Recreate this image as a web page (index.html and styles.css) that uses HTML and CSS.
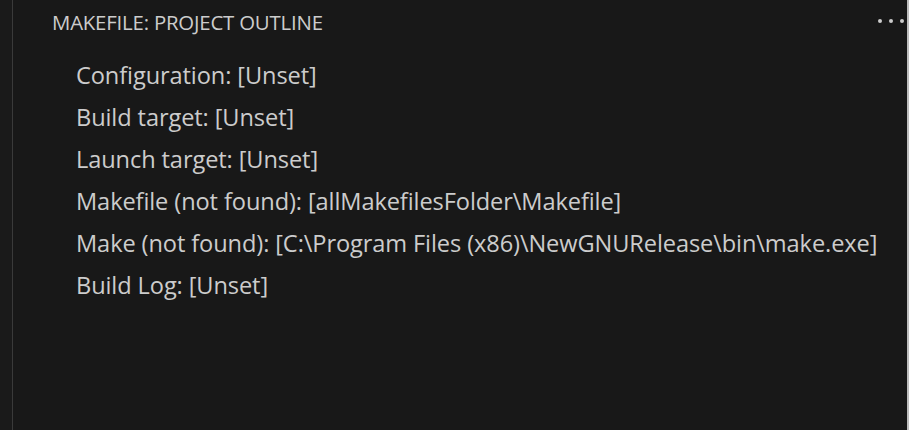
FILE: index.html
```html
<!DOCTYPE html>
<html>
<head>
<meta charset="utf-8">
<link rel="stylesheet" href="styles.css">
</head>
<body>
<div class="frame">
  <div class="gutter"></div>
  <div class="panel">
    <div class="header">
      <span class="title">MAKEFILE: PROJECT OUTLINE</span>
      <span class="more"><i></i><i></i><i></i></span>
    </div>
    <ul class="tree">
      <li class="row">Configuration: [Unset]</li>
      <li class="row">Build target: [Unset]</li>
      <li class="row">Launch target: [Unset]</li>
      <li class="row">Makefile (not found): [allMakefilesFolder\Makefile]</li>
      <li class="row">Make (not found): [C:\Program Files (x86)\NewGNURelease\bin\make.exe]</li>
      <li class="row">Build Log: [Unset]</li>
    </ul>
  </div>
  <div class="edge"></div>
</div>
</body>
</html>
```
FILE: styles.css
```css
html, body {
  margin: 0;
  padding: 0;
  background: #181818;
}
.frame {
  display: flex;
  width: 909px;
  height: 430px;
  overflow: hidden;
  font-family: "Open Sans", "Noto Sans", sans-serif;
  color: #cccccc;
}
.gutter {
  width: 12px;
  flex: none;
  border-right: 1px solid #3a3a3a;
  background: #1a1a1a;
}
.panel {
  flex: 1;
  display: flex;
  flex-direction: column;
  background: #181818;
}
.header {
  height: 44px;
  display: flex;
  align-items: center;
  justify-content: space-between;
  padding-left: 39px;
  padding-right: 3px;
}
.title {
  font-size: 20.4px;
  letter-spacing: -0.2px;
  color: #cccccc;
}
.more {
  display: flex;
  gap: 7px;
  align-items: center;
  margin-top: -2px;
}
.more i {
  width: 4px;
  height: 4px;
  border-radius: 50%;
  background: #cccccc;
}
.tree {
  list-style: none;
  margin: 0;
  padding: 10px 0 0 0;
}
.row {
  height: 42px;
  line-height: 42px;
  padding-left: 63px;
  font-size: 23.6px;
  letter-spacing: -0.1px;
  white-space: nowrap;
}
.edge {
  width: 2px;
  flex: none;
  background: #bdbdbd;
}
```
